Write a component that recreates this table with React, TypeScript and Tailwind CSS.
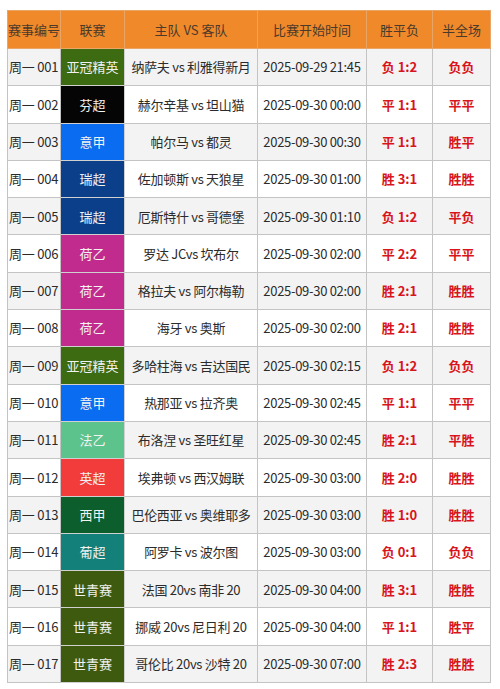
import React from "react";

type Row = {
  id: string;
  league: string;
  color: string;
  match: string;
  time: string;
  result: string;
  half: string;
};

const rows: Row[] = [
  { id: "周一 001", league: "亚冠精英", color: "bg-[#3d6b12]", match: "纳萨夫 vs 利雅得新月", time: "2025-09-29 21:45", result: "负 1:2", half: "负负" },
  { id: "周一 002", league: "芬超", color: "bg-[#050505]", match: "赫尔辛基 vs 坦山猫", time: "2025-09-30 00:00", result: "平 1:1", half: "平平" },
  { id: "周一 003", league: "意甲", color: "bg-[#0a6cf0]", match: "帕尔马 vs 都灵", time: "2025-09-30 00:30", result: "平 1:1", half: "胜平" },
  { id: "周一 004", league: "瑞超", color: "bg-[#0b3f8a]", match: "佐加顿斯 vs 天狼星", time: "2025-09-30 01:00", result: "胜 3:1", half: "胜胜" },
  { id: "周一 005", league: "瑞超", color: "bg-[#0b3f8a]", match: "厄斯特什 vs 哥德堡", time: "2025-09-30 01:10", result: "负 1:2", half: "平负" },
  { id: "周一 006", league: "荷乙", color: "bg-[#c22b8e]", match: "罗达 JCvs 坎布尔", time: "2025-09-30 02:00", result: "平 2:2", half: "平平" },
  { id: "周一 007", league: "荷乙", color: "bg-[#c22b8e]", match: "格拉夫 vs 阿尔梅勒", time: "2025-09-30 02:00", result: "胜 2:1", half: "胜胜" },
  { id: "周一 008", league: "荷乙", color: "bg-[#c22b8e]", match: "海牙 vs 奥斯", time: "2025-09-30 02:00", result: "胜 2:1", half: "胜胜" },
  { id: "周一 009", league: "亚冠精英", color: "bg-[#3d6b12]", match: "多哈柱海 vs 吉达国民", time: "2025-09-30 02:15", result: "负 1:2", half: "负负" },
  { id: "周一 010", league: "意甲", color: "bg-[#0a6cf0]", match: "热那亚 vs 拉齐奥", time: "2025-09-30 02:45", result: "平 1:1", half: "平平" },
  { id: "周一 011", league: "法乙", color: "bg-[#5cc38d]", match: "布洛涅 vs 圣旺红星", time: "2025-09-30 02:45", result: "胜 2:1", half: "平胜" },
  { id: "周一 012", league: "英超", color: "bg-[#f23b3b]", match: "埃弗顿 vs 西汉姆联", time: "2025-09-30 03:00", result: "胜 2:0", half: "胜胜" },
  { id: "周一 013", league: "西甲", color: "bg-[#0c5f2c]", match: "巴伦西亚 vs 奥维耶多", time: "2025-09-30 03:00", result: "胜 1:0", half: "胜胜" },
  { id: "周一 014", league: "葡超", color: "bg-[#13807a]", match: "阿罗卡 vs 波尔图", time: "2025-09-30 03:00", result: "负 0:1", half: "负负" },
  { id: "周一 015", league: "世青赛", color: "bg-[#3e5a0f]", match: "法国 20vs 南非 20", time: "2025-09-30 04:00", result: "胜 3:1", half: "胜胜" },
  { id: "周一 016", league: "世青赛", color: "bg-[#3e5a0f]", match: "挪威 20vs 尼日利 20", time: "2025-09-30 04:00", result: "平 1:1", half: "胜平" },
  { id: "周一 017", league: "世青赛", color: "bg-[#3e5a0f]", match: "哥伦比 20vs 沙特 20", time: "2025-09-30 07:00", result: "胜 2:3", half: "胜胜" },
];

const App: React.FC = () => {
  return (
    <div
      className="bg-white w-[500px] h-[689px] pt-[10px] pl-[7px] overflow-hidden"
      style={{ fontFamily: '"Noto Sans CJK SC", "Noto Sans", sans-serif' }}
    >
      <table className="border-collapse w-[483px] table-fixed text-[13px] text-[#2b2b2b]">
        <colgroup>
          <col className="w-[53px]" />
          <col className="w-[64px]" />
          <col className="w-[133px]" />
          <col className="w-[109px]" />
          <col className="w-[66px]" />
          <col className="w-[58px]" />
        </colgroup>
        <thead>
          <tr className="h-[38px] bg-[#f0892a] text-[#4a3a2a]">
            {["赛事编号", "联赛", "主队 VS 客队", "比赛开始时间", "胜平负", "半全场"].map((h) => (
              <th key={h} className="font-normal text-[13px] border border-[#e9a565] px-0 whitespace-nowrap">
                {h}
              </th>
            ))}
          </tr>
        </thead>
        <tbody>
          {/* 奇数行浅灰底 */}
          {rows.map((r, i) => (
            <tr key={r.id} className={`h-[37.3px] ${i % 2 === 0 ? "bg-[#f3f3f3]" : "bg-white"}`}>
              <td className="border border-[#c4c4c4] pl-[1px] whitespace-nowrap tracking-[-0.2px]">{r.id}</td>
              <td className={`border border-[#d0d0d0] text-center text-[#f2f2f2] ${r.color}`}>{r.league}</td>
              <td className="border border-[#c4c4c4] text-center whitespace-nowrap tracking-[-0.3px]">{r.match}</td>
              <td className="border border-[#c4c4c4] text-center whitespace-nowrap tracking-[-0.3px]">{r.time}</td>
              <td className="border border-[#c4c4c4] text-center font-bold text-[#d8141c]">{r.result}</td>
              <td className="border border-[#c4c4c4] text-center font-bold text-[#d8141c]">{r.half}</td>
            </tr>
          ))}
        </tbody>
      </table>
    </div>
  );
};

export default App;
